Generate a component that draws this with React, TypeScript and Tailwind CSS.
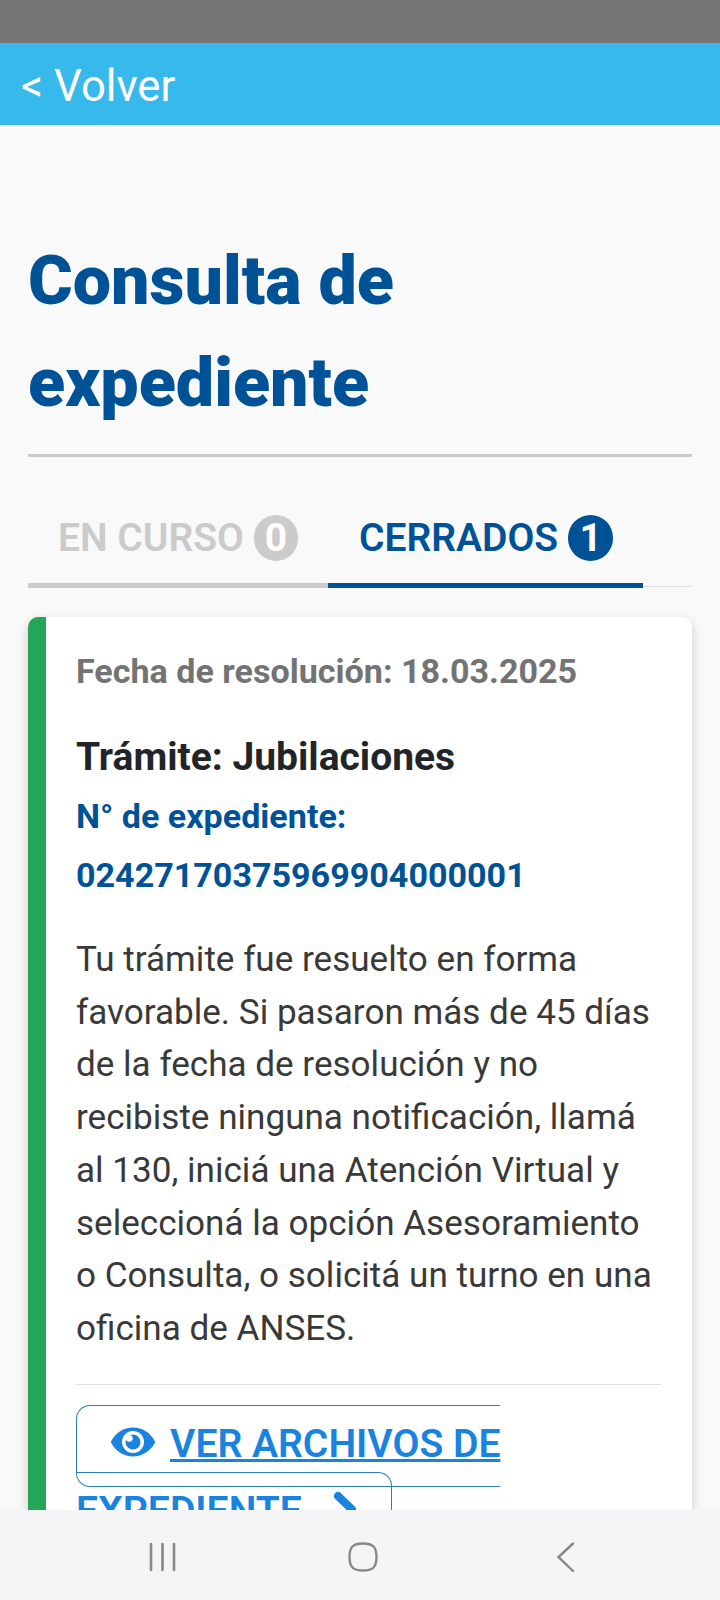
const TABS = [
  { label: "EN CURSO", count: 0, active: false },
  { label: "CERRADOS", count: 1, active: true },
]

const expediente = {
  fecha: "18.03.2025",
  tramite: "Jubilaciones",
  numero: "02427170375969904000001",
  mensaje:
    "Tu trámite fue resuelto en forma favorable. Si pasaron más de 45 días de la fecha de resolución y no recibiste ninguna notificación, llamá al 130, iniciá una Atención Virtual y seleccioná la opción Asesoramiento o Consulta, o solicitá un turno en una oficina de ANSES.",
}

function EyeIcon() {
  return (
    <svg viewBox="0 0 44 30" className="mr-[15px] inline h-[30px] w-[44px] align-[0px]">
      <path
        d="M.3 13.9C4.5 5.8 12.600 .5 22 .5S39.500 5.800 43.700 13.900a2.300 2.300 0 0 1 0 2.200C39.500 24.200 31.400 29.500 22 29.500S4.500 24.200.3 16.100a2.300 2.300 0 0 1 0-2.200Z"
        fill="currentColor"
      />
      <circle cx="22" cy="15" r="11" fill="white" />
      <circle cx="22" cy="15" r="7.5" fill="currentColor" />
      <circle cx="18.300" cy="11.300" r="3.400" fill="white" />
    </svg>
  )
}

function ChevronIcon() {
  return (
    <svg
      viewBox="0 0 25 39"
      fill="none"
      stroke="currentColor"
      strokeWidth="8"
      strokeLinecap="round"
      strokeLinejoin="round"
      className="ml-[30px] inline h-[39px] w-[25px] align-[-0.125em]"
    >
      <path d="M6 6 20 19.500 6 33" />
    </svg>
  )
}

function Tabs() {
  return (
    <div className="mt-[43px] flex items-end">
      {TABS.map((tab) => (
        <button
          key={tab.label}
          className={`flex h-[88px] items-start gap-[10px] border-b-5 pt-[15px] text-[39px] leading-[46px] font-semibold ${
            tab.active
              ? "w-[315px] border-[#005296] pl-[31px] text-[#005296]"
              : "w-[300px] border-[#cbcbcb] pl-[30px] text-[#cbcbcb]"
          }`}
        >
          {tab.label}
          <span
            className={`h-[46px] rounded-full text-center font-bold text-white ${
              tab.active ? "w-[45px] bg-[#005296]" : "w-[44px] bg-[#cbcbcb]"
            }`}
          >
            {tab.count}
          </span>
        </button>
      ))}
      <div className="mb-px h-px flex-1 bg-[#dee2e6]" />
    </div>
  )
}

function ExpedienteCard() {
  return (
    <article className="mt-[29px] rounded-[10px] border-l-18 border-[#24a558] bg-white pt-[34px] pr-[30px] pb-10 pl-[30px] shadow-[0_4px_12px_rgba(0,0,0,0.18)]">
      <p className="text-[34.1px] leading-[40px] font-bold text-[#737373]">
        Fecha de resolución: {expediente.fecha}
      </p>
      <h2 className="mt-[43px] text-[39px] leading-[46px] font-bold text-[#212529]">
        Trámite: {expediente.tramite}
      </h2>
      <p className="mt-[7px] text-[34.1px] leading-[59px] font-bold text-[#005296]">
        N° de expediente: {expediente.numero}
      </p>
      <p className="mt-[28px] text-[35.1px] leading-[52.7px] text-[#393939]">
        {expediente.mensaje}
      </p>
      <hr className="mt-[29px] border-[#dee2e6]" />
      <div className="mt-[26px] text-[39.1px] leading-[67px] font-semibold">
        <a
          href="#"
          className="rounded-[14px] border border-[#2b7fbb] px-[34px] pt-[15px] pb-[19px] text-[#1a83e0]"
        >
          <EyeIcon />
          <span className="underline">VER ARCHIVOS DE EXPEDIENTE</span>
          <ChevronIcon />
        </a>
      </div>
    </article>
  )
}

function NavigationBar() {
  return (
    <nav className="flex h-[90px] shrink-0 items-center justify-between bg-[#f5f5f8] pt-[3px] pr-[144px] pl-[147px]">
      <svg width="30" height="32" viewBox="0 0 30 32" fill="none" stroke="#888" strokeWidth="2.6" strokeLinecap="round">
        <path d="M4 3v26M15.5 3v26M27 3v26" />
      </svg>
      <svg width="32" height="32" viewBox="0 0 32 32" fill="none" stroke="#888" strokeWidth="2.4" className="-ml-2">
        <path d="M16 2.5C26 2.5 29.5 6 29.5 16S26 29.5 16 29.5 2.5 26 2.5 16 6 2.5 16 2.5Z" />
      </svg>
      <svg width="20" height="32" viewBox="0 0 20 32" fill="none" stroke="#888" strokeWidth="2.4" strokeLinecap="round">
        <path d="M17 2.5 2.5 16 17 30" />
      </svg>
    </nav>
  )
}

export default function App() {
  return (
    <div className="flex h-[1600px] w-[720px] flex-col overflow-hidden bg-[#f9f9f9] font-[Roboto,sans-serif]">
      <div className="h-[43px] shrink-0 bg-[#757575]" />
      <header className="flex h-[82px] shrink-0 items-center bg-[#38b9ec] pt-[6px] pl-[21px] text-[43.7px] text-white">
        <button>&lt; Volver</button>
      </header>
      <main className="min-h-0 flex-1 overflow-hidden px-7 pt-[105px]">
        <h1 className="border-b-3 border-[#cbcbcb] pb-[20px] text-[68.2px] leading-[102px] font-black text-[#005296]">
          Consulta de expediente
        </h1>
        <Tabs />
        <ExpedienteCard />
      </main>
      <NavigationBar />
    </div>
  )
}
